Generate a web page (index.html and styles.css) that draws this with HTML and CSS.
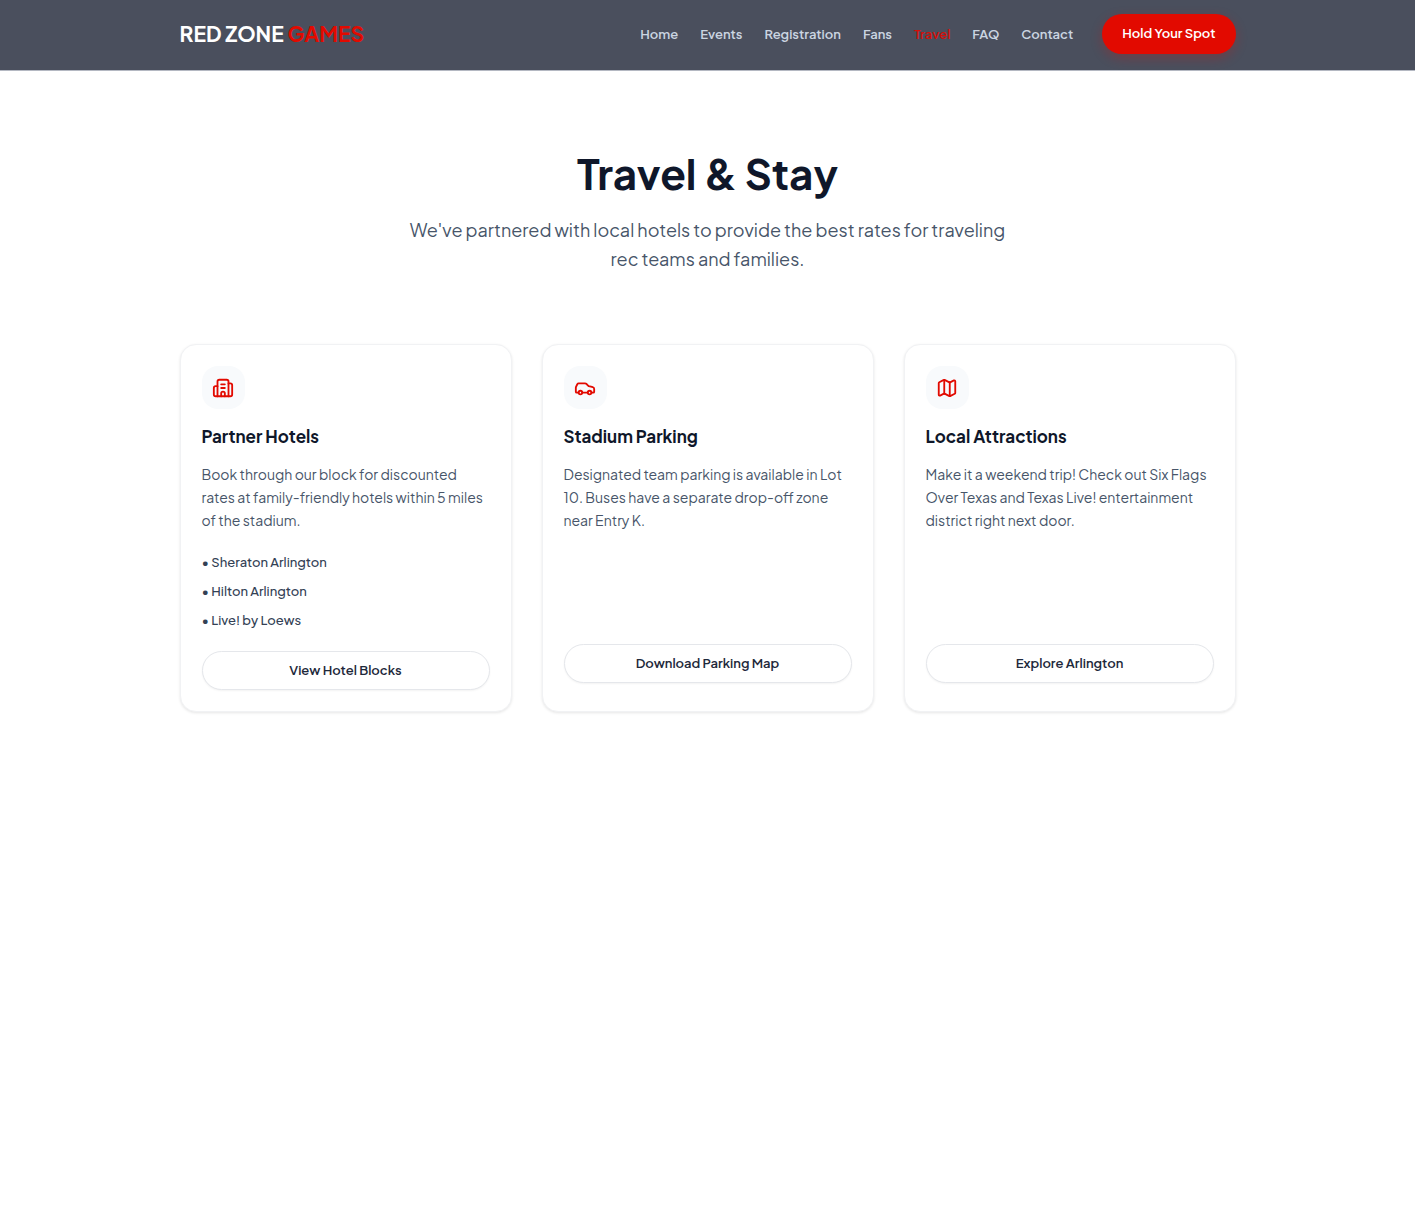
FILE: index.html
```html
<!DOCTYPE html>
<html lang="en">
<head>
  <meta charset="UTF-8" />
  <meta name="viewport" content="width=device-width, initial-scale=1.0"/>
  <title>Travel &amp; Stay | Red Zone Games</title>
  <link rel="stylesheet" href="styles.css">
</head>
<body>
  <header class="header">
    <div class="container header-inner">
      <a class="logo" href="#">RED ZONE <span>GAMES</span></a>
      <nav class="nav">
        <a href="#">Home</a>
        <a href="#">Events</a>
        <a href="#">Registration</a>
        <a href="#">Fans</a>
        <a class="active" href="#">Travel</a>
        <a href="#">FAQ</a>
        <a href="#">Contact</a>
      </nav>
      <button class="btn btn-primary">Hold Your Spot</button>
    </div>
  </header>

  <main class="container">
    <section class="intro">
      <h1>Travel &amp; Stay</h1>
      <p>We've partnered with local hotels to provide the best rates for traveling rec teams and families.</p>
    </section>

    <section class="cards">
      <article class="card">
        <div class="icon">
          <svg viewBox="0 0 24 24">
            <path d="M10 12h4"/>
            <path d="M10 8h4"/>
            <path d="M14 21v-3a2 2 0 0 0-4 0v3"/>
            <path d="M6 10H4a2 2 0 0 0-2 2v7a2 2 0 0 0 2 2h16a2 2 0 0 0 2-2V9a2 2 0 0 0-2-2h-2"/>
            <path d="M6 21V5a2 2 0 0 1 2-2h8a2 2 0 0 1 2 2v16"/>
          </svg>
        </div>
        <h2>Partner Hotels</h2>
        <div class="card-body">
          <p>Book through our block for discounted rates at family-friendly hotels within 5 miles of the stadium.</p>
          <ul>
            <li>• Sheraton Arlington</li>
            <li>• Hilton Arlington</li>
            <li>• Live! by Loews</li>
          </ul>
        </div>
        <button class="btn btn-outline">View Hotel Blocks</button>
      </article>

      <article class="card">
        <div class="icon">
          <svg viewBox="0 0 24 24">
            <path d="M19 17h2c.6 0 1-.4 1-1v-3c0-.9-.7-1.7-1.5-1.9C18.7 10.6 16 10 16 10s-1.3-1.4-2.2-2.3c-.5-.4-1.1-.7-1.8-.7H5c-.6 0-1.1.4-1.4.9l-1.4 2.9A3.7 3.7 0 0 0 2 12v4c0 .6.4 1 1 1h2"/>
            <circle cx="7" cy="17" r="2"/>
            <path d="M9 17h6"/>
            <circle cx="17" cy="17" r="2"/>
          </svg>
        </div>
        <h2>Stadium Parking</h2>
        <div class="card-body">
          <p>Designated team parking is available in Lot 10. Buses have a separate drop-off zone near Entry K.</p>
        </div>
        <button class="btn btn-outline">Download Parking Map</button>
      </article>

      <article class="card">
        <div class="icon">
          <svg viewBox="0 0 24 24">
            <path d="M14.106 5.553a2 2 0 0 0 1.788 0l3.659-1.83A1 1 0 0 1 21 4.619v12.764a1 1 0 0 1-.553.894l-4.553 2.277a2 2 0 0 1-1.788 0l-4.212-2.106a2 2 0 0 0-1.788 0l-3.659 1.83A1 1 0 0 1 3 19.381V6.618a1 1 0 0 1 .553-.894l4.553-2.277a2 2 0 0 1 1.788 0z"/>
            <path d="M15 5.764v15"/>
            <path d="M9 3.236v15"/>
          </svg>
        </div>
        <h2>Local Attractions</h2>
        <div class="card-body">
          <p>Make it a weekend trip! Check out Six Flags Over Texas and Texas Live! entertainment district right next door.</p>
        </div>
        <button class="btn btn-outline">Explore Arlington</button>
      </article>
    </section>
  </main>
</body>
</html>
```
FILE: styles.css
```css
* { box-sizing: border-box; margin: 0; padding: 0; }
body { font-family: "Plus Jakarta Sans", Inter, sans-serif; background: #fff; color: #0f172a; }
a { text-decoration: none; }
.container { max-width: 1100px; margin: 0 auto; padding: 0 22px; }

.header { background: #4a4f5d; border-bottom: 1px solid #b4b8c2; }
.header-inner { display: flex; align-items: center; padding-top: 14px; padding-bottom: 16px; }
.logo { color: #fff; font-size: 21px; font-weight: 700; line-height: 28px; margin-right: auto; }
.logo span { color: #e20a00; }
.nav { display: flex; gap: 22px; margin-right: 29px; }
.nav a { color: #cbd5e1; font-size: 13px; font-weight: 600; line-height: 20px; }
.nav a.active { color: #d20f0a; }

.btn { font-family: inherit; font-size: 13px; font-weight: 600; line-height: 19px; cursor: pointer; }
.btn-primary { background: #e20a00; color: #fff; border: none; border-radius: 20px; padding: 10px 20px 11px; box-shadow: 0 4px 12px rgba(226, 10, 0, 0.25); }
.btn-primary:hover { background: #c00900; }
.btn-outline { width: 100%; background: #fff; color: #1e293b; border: 1px solid #e5e7eb; border-radius: 20px; padding: 9px; box-shadow: 0 1px 2px rgba(0, 0, 0, 0.05); }
.btn-outline:hover { background: #f8fafc; }

.intro { max-width: 620px; margin: 0 auto; padding: 75px 0 71px; text-align: center; }
.intro h1 { font-size: 42px; font-weight: 700; line-height: 54px; margin-bottom: 15px; }
.intro p { color: #475569; font-size: 18px; line-height: 29px; }

.cards { display: grid; grid-template-columns: repeat(3, 1fr); gap: 30px; padding-bottom: 72px; }
.card { background: #fff; border: 1px solid #f1f2f4; border-radius: 16px; padding: 21px; box-shadow: 0 1px 3px rgba(0, 0, 0, 0.1); }
.icon { display: flex; align-items: center; justify-content: center; width: 43px; height: 43px; background: #f8fafc; border-radius: 16px; margin-bottom: 14px; }
.icon svg { width: 22px; height: 22px; fill: none; stroke: #e20a00; stroke-width: 2; stroke-linecap: round; stroke-linejoin: round; }
.card h2 { font-size: 17px; font-weight: 700; line-height: 26px; margin-bottom: 14px; }
.card-body { min-height: 181px; }
.card-body p { color: #475569; font-size: 14px; line-height: 23px; }
.card-body ul { list-style: none; padding: 20px 0; }
.card-body li { color: #334155; font-size: 13px; font-weight: 500; line-height: 21px; margin-bottom: 8px; }
.card-body li:last-child { margin-bottom: 0; }
```
